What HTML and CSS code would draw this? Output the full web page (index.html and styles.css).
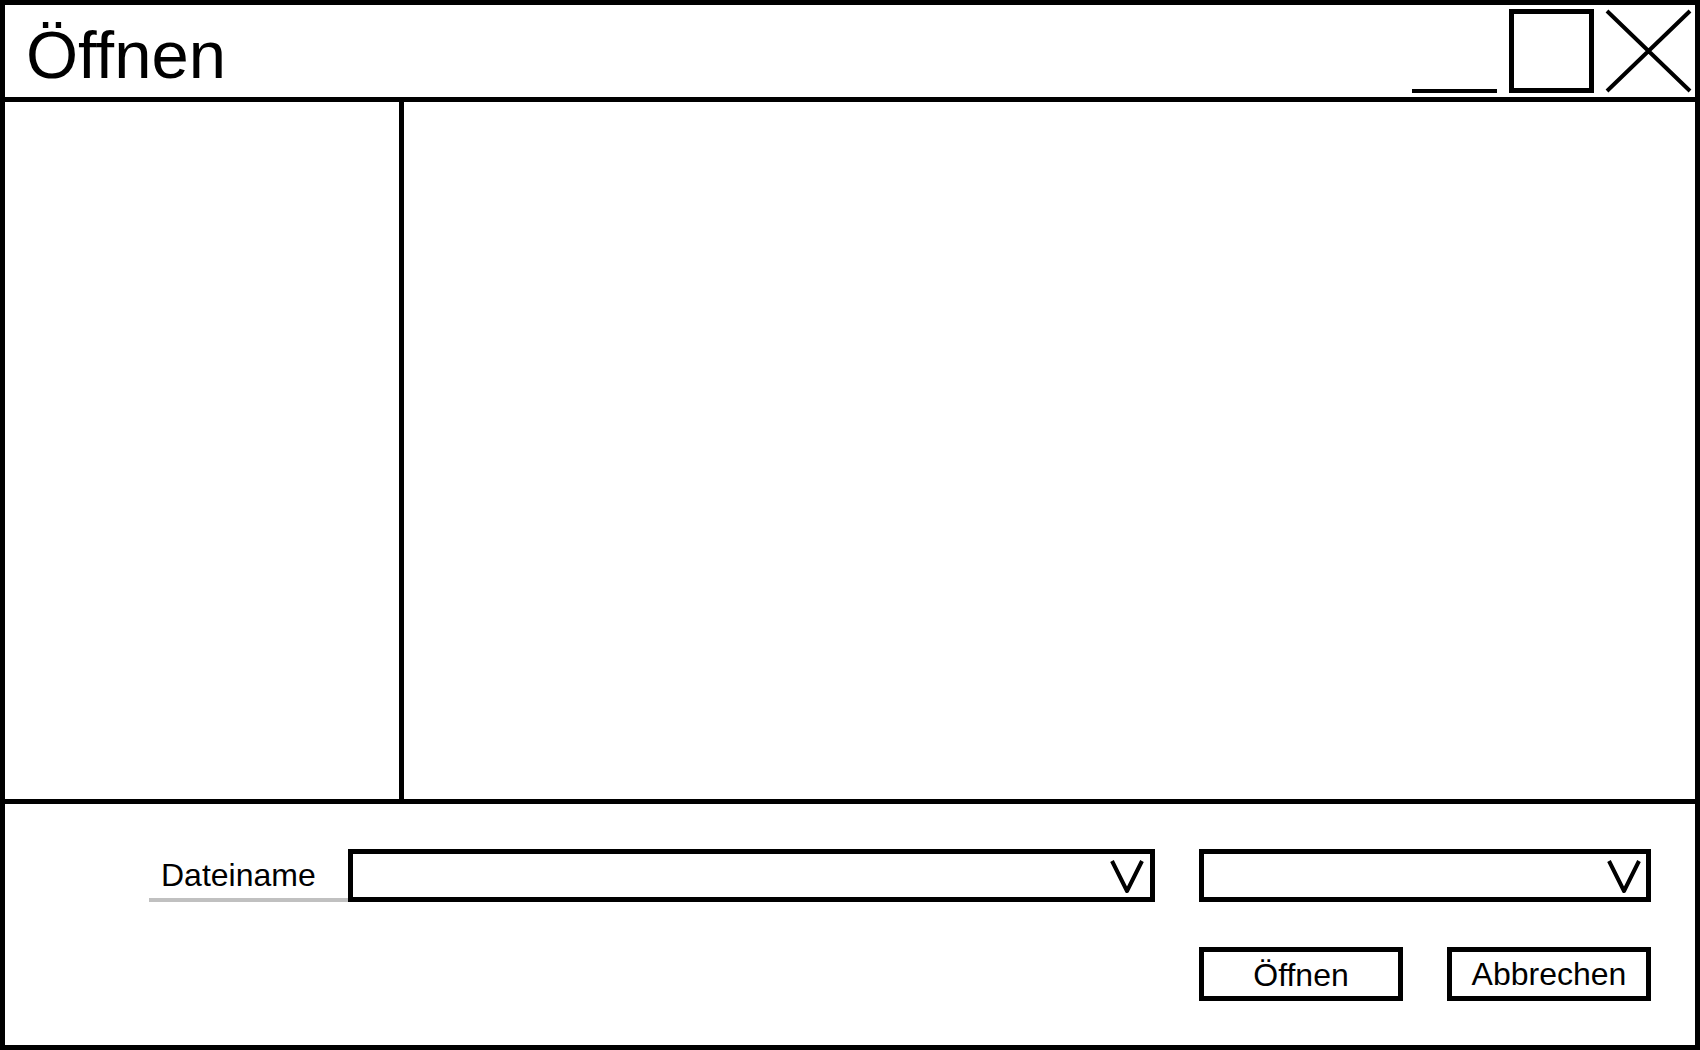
FILE: index.html
```html
<!DOCTYPE html>
<html lang="de">
<head>
<meta charset="utf-8">
<title>Öffnen</title>
<link rel="stylesheet" href="styles.css">
</head>
<body>
<div class="window">
  <div class="titlebar">
    <div class="title">Öffnen</div>
    <div class="controls">
      <svg class="ctl ctl-min" width="85" height="84" viewBox="0 0 85 84"><rect x="0" y="80" width="85" height="4" fill="#000"/></svg>
      <svg class="ctl ctl-max" width="85" height="84" viewBox="0 0 85 84"><rect x="2.5" y="2.5" width="80" height="79" fill="none" stroke="#000" stroke-width="5"/></svg>
      <svg class="ctl ctl-close" width="87" height="84" viewBox="0 0 87 84"><path d="M2 2 L85 82 M85 2 L2 82" stroke="#000" stroke-width="4" fill="none"/></svg>
    </div>
  </div>
  <div class="body">
    <div class="sidebar"></div>
    <div class="content"></div>
  </div>
  <div class="footer">
    <div class="row">
      <div class="label">Dateiname</div>
      <div class="combo combo-name">
        <svg class="chev" width="34" height="34" viewBox="0 0 34 34"><path d="M2 2 L17 32 L32 2" fill="none" stroke="#000" stroke-width="4" stroke-linejoin="round"/></svg>
      </div>
      <div class="combo combo-type">
        <svg class="chev" width="34" height="34" viewBox="0 0 34 34"><path d="M2 2 L17 32 L32 2" fill="none" stroke="#000" stroke-width="4" stroke-linejoin="round"/></svg>
      </div>
    </div>
    <div class="buttons">
      <div class="btn btn-open">Öffnen</div>
      <div class="btn">Abbrechen</div>
    </div>
  </div>
</div>
</body>
</html>
```
FILE: styles.css
```css
html, body {
  margin: 0;
  padding: 0;
  background: #fff;
}
body {
  font-family: "Liberation Sans", Arial, sans-serif;
  color: #000;
}
.window {
  width: 1700px;
  height: 1050px;
  box-sizing: border-box;
  border: 5px solid #000;
  display: flex;
  flex-direction: column;
}
.titlebar {
  height: 92px;
  border-bottom: 5px solid #000;
  display: flex;
  justify-content: space-between;
  align-items: flex-start;
  flex-shrink: 0;
}
.title {
  font-size: 67px;
  line-height: 67px;
  padding-top: 16px;
  padding-left: 21px;
}
.controls {
  display: flex;
  align-items: flex-start;
  padding-top: 4px;
  padding-right: 3px;
}
.ctl { display: block; }
.ctl-max { margin-left: 12px; }
.ctl-close { margin-left: 11px; }
.body {
  flex: 1;
  display: flex;
  border-bottom: 5px solid #000;
}
.sidebar {
  width: 394px;
  border-right: 5px solid #000;
}
.content { flex: 1; }
.footer {
  height: 241px;
  box-sizing: border-box;
  padding: 45px 44px 44px 144px;
  display: flex;
  flex-direction: column;
  gap: 45px;
  flex-shrink: 0;
}
.row {
  display: flex;
  height: 53px;
}
.label {
  width: 199px;
  box-sizing: border-box;
  border-bottom: 4px solid #c0c0c0;
  display: flex;
  align-items: flex-end;
  padding-left: 12px;
  padding-bottom: 7px;
  font-size: 32px;
  line-height: 32px;
}
.combo {
  box-sizing: border-box;
  border: 5px solid #000;
  display: flex;
  justify-content: flex-end;
  align-items: flex-start;
  padding-top: 5px;
  padding-right: 6px;
}
.combo-name { width: 807px; }
.combo-type { width: 452px; margin-left: 44px; padding-right: 5px; }
.chev { display: block; }
.buttons {
  display: flex;
  justify-content: flex-end;
  gap: 44px;
}
.btn {
  width: 204px;
  height: 54px;
  box-sizing: border-box;
  border: 5px solid #000;
  text-align: center;
  font-size: 32px;
  line-height: 44px;
}
.btn-open {
  padding-top: 3px;
  line-height: 41px;
}
```
